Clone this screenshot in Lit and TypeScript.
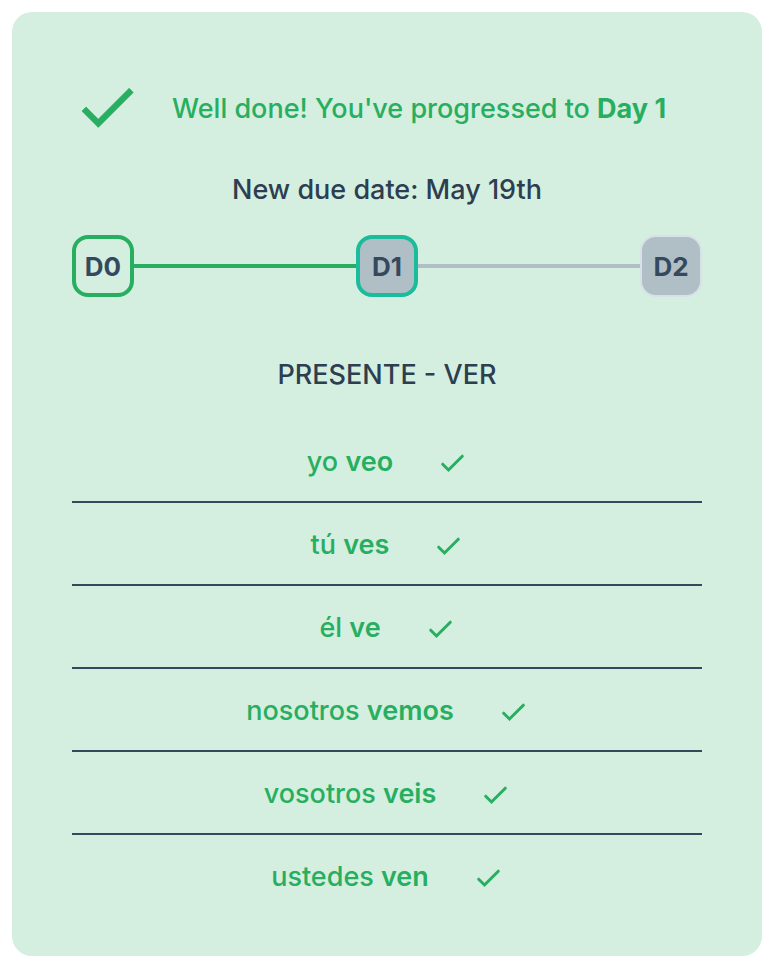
import { LitElement, html, css } from "lit";
import { customElement, property } from "lit/decorators.js";

interface Form {
  pronoun: string;
  verb: string;
}

const forms: Form[] = [
  { pronoun: "yo", verb: "veo" },
  { pronoun: "tú", verb: "ves" },
  { pronoun: "él", verb: "ve" },
  { pronoun: "nosotros", verb: "vemos" },
  { pronoun: "vosotros", verb: "veis" },
  { pronoun: "ustedes", verb: "ven" },
];

@customElement("day-progress")
export class DayProgress extends LitElement {
  static styles = css`
    :host {
      display: block;
    }
    .track {
      display: flex;
      align-items: center;
      margin: 0;
      padding: 0;
      list-style: none;
    }
    .step {
      display: flex;
      align-items: center;
    }
    .step.linked {
      flex: 1;
    }
    .line {
      flex: 1;
      height: 4px;
      background: #b0bec5;
    }
    .line.done {
      background: #27ae60;
    }
    .day {
      box-sizing: border-box;
      display: flex;
      align-items: center;
      justify-content: center;
      width: 62px;
      height: 62px;
      padding-top: 2px;
      border-radius: 16px;
      border: 2px solid #d8e0e8;
      background: #b0bec5;
      color: #34495e;
      font-size: 26px;
      font-weight: 700;
    }
    .day.done {
      border: 4px solid #27ae60;
      background: transparent;
    }
    .day.current {
      border: 4px solid #1abc9c;
    }
  `;

  @property({ type: Number }) current = 1;
  @property({ type: Number }) total = 3;

  render() {
    const days = Array.from({ length: this.total }, (_, i) => i);
    return html`<ol class="track">
      ${days.map((d) => {
        const state = d < this.current ? "done" : d === this.current ? "current" : "";
        return html`<li class="step ${d > 0 ? "linked" : ""}">
          ${d > 0 ? html`<span class="line ${d <= this.current ? "done" : ""}"></span>` : ""}
          <span class="day ${state}">D${d}</span>
        </li>`;
      })}
    </ol>`;
  }
}

@customElement("app-root")
export class AppRoot extends LitElement {
  static styles = css`
    :host {
      display: block;
      padding: 12px 4px 8px 12px;
      font-family: Inter, "Liberation Sans", sans-serif;
      font-size: 27px;
      font-weight: 450;
      line-height: 34px;
      color: #2c3e50;
    }
    .card {
      padding: 60px 60px 40px;
      border-radius: 20px;
      background: #d4efdf;
    }
    .head {
      display: flex;
      align-items: center;
      gap: 30px;
      color: #27ae60;
    }
    .head p {
      padding-top: 4px;
    }
    .big {
      flex: none;
      width: 70px;
      height: 70px;
    }
    p,
    h2 {
      margin: 0;
      font-size: inherit;
      font-weight: inherit;
    }
    .head b {
      font-weight: 700;
    }
    .due {
      margin: 31px 0 28px;
      text-align: center;
    }
    .title {
      margin: 61px 0 28px;
      text-align: center;
    }
    .forms {
      margin: 0;
      padding: 0;
      list-style: none;
      color: #27ae60;
    }
    .form {
      display: flex;
      align-items: center;
      justify-content: center;
      gap: 46px;
      height: 79px;
      padding-top: 2px;
    }
    .form + .form {
      border-top: 2px solid #34495e;
    }
    .form b {
      font-weight: 600;
    }
    .small {
      flex: none;
      width: 28px;
      height: 28px;
    }
  `;

  render() {
    return html`<main class="card">
      <header class="head">
        <svg class="big" viewBox="0 0 24 24" fill="currentColor" stroke="currentColor" stroke-width="0.25" aria-hidden="true">
          <path d="M9 16.17 4.83 12l-1.42 1.41L9 19 21 7l-1.41-1.41z" />
        </svg>
        <p>Well done! You've progressed to <b>Day 1</b></p>
      </header>
      <p class="due">New due date: May 19th</p>
      <day-progress current="1" total="3"></day-progress>
      <h2 class="title">PRESENTE - VER</h2>
      <ul class="forms">
        ${forms.map(
          (f) => html`<li class="form">
            <span>${f.pronoun} <b>${f.verb}</b></span>
            <svg class="small" viewBox="0 0 28 28" fill="none" stroke="currentColor"
              stroke-width="3" stroke-linecap="round" stroke-linejoin="miter" role="img" aria-label="correct">
              <path d="M3.7 16.2l5.8 5.8L23.3 8.2" />
            </svg>
          </li>`
        )}
      </ul>
    </main>`;
  }
}
